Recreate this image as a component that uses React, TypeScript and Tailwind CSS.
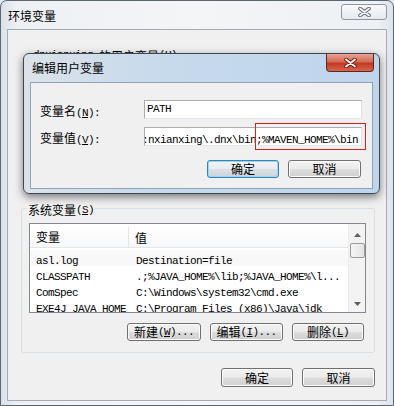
import React from "react";

const cjk = "font-['Noto_Sans_CJK_SC',sans-serif] text-[12px] leading-none text-black";
const mono = "font-['Liberation_Mono',monospace] text-[11px] tracking-[-0.6px] leading-none";
const btn =
  "flex items-center justify-center rounded-[3px] border border-[#707070] bg-[linear-gradient(180deg,#f2f2f2_0%,#ebebeb_48%,#dddddd_52%,#cfcfcf_100%)] shadow-[inset_0_0_0_1px_#fcfcfc]";
const btnDefault =
  "flex items-center justify-center rounded-[3px] border border-[#3c7fb1] bg-[linear-gradient(180deg,#f2f4f6_0%,#e8ecef_48%,#d9dfe4_52%,#cdd5dc_100%)] shadow-[inset_0_0_0_1px_#95d8f8]";

function Mono({ children }: { children: React.ReactNode }) {
  return <span className={mono}>{children}</span>;
}

function CloseX({ red }: { red?: boolean }) {
  return (
    <svg width="13" height="10" viewBox="0 0 13 10">
      <path d="M2 1.5 L11 8.5 M11 1.5 L2 8.5" stroke={red ? "#6b1c12" : "#5b6470"} strokeWidth="3.6" strokeLinecap="round" />
      <path d="M2 1.5 L11 8.5 M11 1.5 L2 8.5" stroke={red ? "#ffffff" : "#f4f6f8"} strokeWidth="1.8" strokeLinecap="round" />
    </svg>
  );
}

const rows = [
  ["asl.log", "Destination=file"],
  ["CLASSPATH", ".;%JAVA_HOME%\\lib;%JAVA_HOME%\\l..."],
  ["ComSpec", "C:\\Windows\\system32\\cmd.exe"],
  ["EXE4J_JAVA_HOME", "C:\\Program Files (x86)\\Java\\jdk"],
];

function ListView() {
  return (
    <div className="flex w-[337px] h-[90px] ml-[7px] mt-[14px] border border-[#828790] bg-white overflow-hidden">
      <div className="flex flex-col flex-1 overflow-hidden">
        <div className="flex h-[24px] shrink-0 items-center border-b border-[#e5e5e5] bg-[linear-gradient(180deg,#ffffff,#f7f8f9)] pt-[3px]">
          <div className="w-[99px] h-full flex items-center pl-[6px] border-r border-[#e5e5e5]">
            <span className={cjk}>变量</span>
          </div>
          <div className="pl-[6px]">
            <span className={cjk}>值</span>
          </div>
        </div>
        <div className="flex flex-col pt-[2px]">
          {rows.map((r, i) => (
            <div key={i} className={"flex h-[16px] shrink-0 items-center whitespace-nowrap " + (i === 0 ? "bg-[#f8f8f8]" : "")}>
              <div className="w-[100px] pl-[6px]">
                <Mono>{r[0]}</Mono>
              </div>
              <div className="pl-[6px]">
                <Mono>{r[1]}</Mono>
              </div>
            </div>
          ))}
        </div>
      </div>
      <div className="flex flex-col items-center w-[17px] shrink-0 bg-[#f3f3f3] border-l border-[#ececec]">
        <div className="flex h-[19px] items-center justify-center pt-[2px]">
          <svg width="7" height="4" viewBox="0 0 7 4">
            <path d="M0 4 L3.5 0 L7 4 Z" fill="#5e5e5e" />
          </svg>
        </div>
        <div className="w-[15px] h-[15px] rounded-[2px] border border-[#9b9b9b] bg-[linear-gradient(90deg,#f4f4f4,#e4e4e4)]" />
        <div className="flex-1" />
        <div className="flex h-[17px] items-center justify-center">
          <svg width="7" height="4" viewBox="0 0 7 4">
            <path d="M0 0 L7 0 L3.5 4 Z" fill="#5e5e5e" />
          </svg>
        </div>
      </div>
    </div>
  );
}

function EditDialog() {
  return (
    <div className="absolute left-[23px] top-[53px] flex flex-col w-[357px] h-[141px] rounded-[6px] border border-[#3b4754] bg-[linear-gradient(90deg,#dce2e8_0%,#c8daec_35%,#bed5ec_100%)] shadow-[0_3px_9px_rgba(0,0,0,0.5)]">
      <div className="flex h-[28px] shrink-0 items-start">
        <span className={cjk + " mt-[8px] ml-[8px]"}>编辑用户变量</span>
        <div className="ml-auto mr-[5px] flex w-[48px] h-[18px] items-center justify-center rounded-b-[4px] border border-t-0 border-[#5a2a22] bg-[linear-gradient(180deg,#e8a294_0%,#d66a56_45%,#c13a24_55%,#d8654c_100%)]">
          <CloseX red />
        </div>
      </div>
      <div className="mx-[6px] flex flex-col h-[107px] border border-[#8fa3b8] bg-[#f0f0f0] pt-[17px]">
        <div className="flex h-[19px] items-center">
          <div className="w-[113px] pl-[9px]">
            <span className={cjk}>变量名</span>
            <Mono>
              (<u>N</u>):
            </Mono>
          </div>
          <div className="flex w-[218px] h-[19px] items-center border border-[#abadb3] border-b-[#e3e9ef] border-r-[#dbdfe6] bg-white pl-[2px]">
            <Mono>PATH</Mono>
          </div>
        </div>
        <div className="flex h-[19px] items-center mt-[8px]">
          <div className="w-[113px] pl-[9px]">
            <span className={cjk}>变量值</span>
            <Mono>
              (<u>V</u>):
            </Mono>
          </div>
          <div className="relative flex w-[218px] h-[19px] items-center border border-[#abadb3] border-b-[#e3e9ef] border-r-[#dbdfe6] bg-white">
            <div className="flex w-full h-full items-center overflow-hidden whitespace-nowrap">
              <span className="ml-[-3px]">
                <Mono>:nxianxing\.dnx\bin;%MAVEN_HOME%\bin</Mono>
              </span>
            </div>
            <div className="absolute left-[110px] top-[-5px] w-[111px] h-[27px] shadow-[inset_0_0_0_1px_#d42020]" />
          </div>
        </div>
        <div className="flex justify-end gap-[9px] pr-[11px] mt-[14px]">
          <div className={btnDefault + " w-[72px] h-[18px]"}>
            <span className={cjk}>确定</span>
          </div>
          <div className={btn + " w-[73px] h-[18px]"}>
            <span className={cjk}>取消</span>
          </div>
        </div>
      </div>
    </div>
  );
}

export default function App() {
  return (
    <div className="relative w-[394px] h-[406px] overflow-hidden bg-[#e2e8ee]">
      <div className="flex flex-col h-full rounded-t-[7px] border border-[#5e6771] bg-[linear-gradient(90deg,#d9e1ea_0%,#eef1f4_4%,#f3f5f7_50%,#eef1f4_96%,#dbe4ed_100%)]">
        <div className="flex h-[28px] shrink-0 items-start">
          <span className={cjk + " mt-[9px] ml-[7px]"}>环境变量</span>
          <div className="ml-auto mr-[6px] mt-[3px] flex w-[46px] h-[16px] items-center justify-center rounded-[3px] border border-[#8d97a2] bg-[linear-gradient(180deg,#f7f9fa,#e6eaee)]">
            <CloseX />
          </div>
        </div>
        <div className="mx-[6px] flex flex-col h-[372px] shrink-0 border border-[#a3acb6] bg-[#f0f0f0]">
          <div className="flex h-[178px] shrink-0 items-start pl-[25px] pt-[20px] whitespace-nowrap">
            <Mono>dnxianxing </Mono>
            <span className={cjk + " ml-[6px]"}>的用户变量</span>
            <Mono>
              (<u>U</u>)
            </Mono>
          </div>
          <div className="relative flex flex-col w-[354px] h-[145px] ml-[13px] rounded-[3px] border border-[#d5dfe5]">
            <div className="absolute left-[5px] top-[-5px] flex h-[12px] items-center bg-[#f0f0f0] px-[1px] whitespace-nowrap">
              <span className={cjk}>系统变量</span>
              <Mono>
                (<u>S</u>)
              </Mono>
            </div>
            <ListView />
            <div className="flex justify-end gap-[9px] pr-[10px] mt-[10px]">
              <div className={btn + " w-[74px] h-[18px]"}>
                <span className={cjk}>新建</span>
                <Mono>
                  (<u>W</u>)...
                </Mono>
              </div>
              <div className={btn + " w-[73px] h-[18px]"}>
                <span className={cjk}>编辑</span>
                <Mono>
                  (<u>I</u>)...
                </Mono>
              </div>
              <div className={btn + " w-[72px] h-[18px]"}>
                <span className={cjk}>删除</span>
                <Mono>
                  (<u>L</u>)
                </Mono>
              </div>
            </div>
          </div>
          <div className="flex justify-end gap-[9px] mr-[11px] mt-[15px]">
            <div className={btn + " w-[72px] h-[19px]"}>
              <span className={cjk}>确定</span>
            </div>
            <div className={btn + " w-[73px] h-[19px]"}>
              <span className={cjk}>取消</span>
            </div>
          </div>
        </div>
      </div>
      <EditDialog />
    </div>
  );
}
